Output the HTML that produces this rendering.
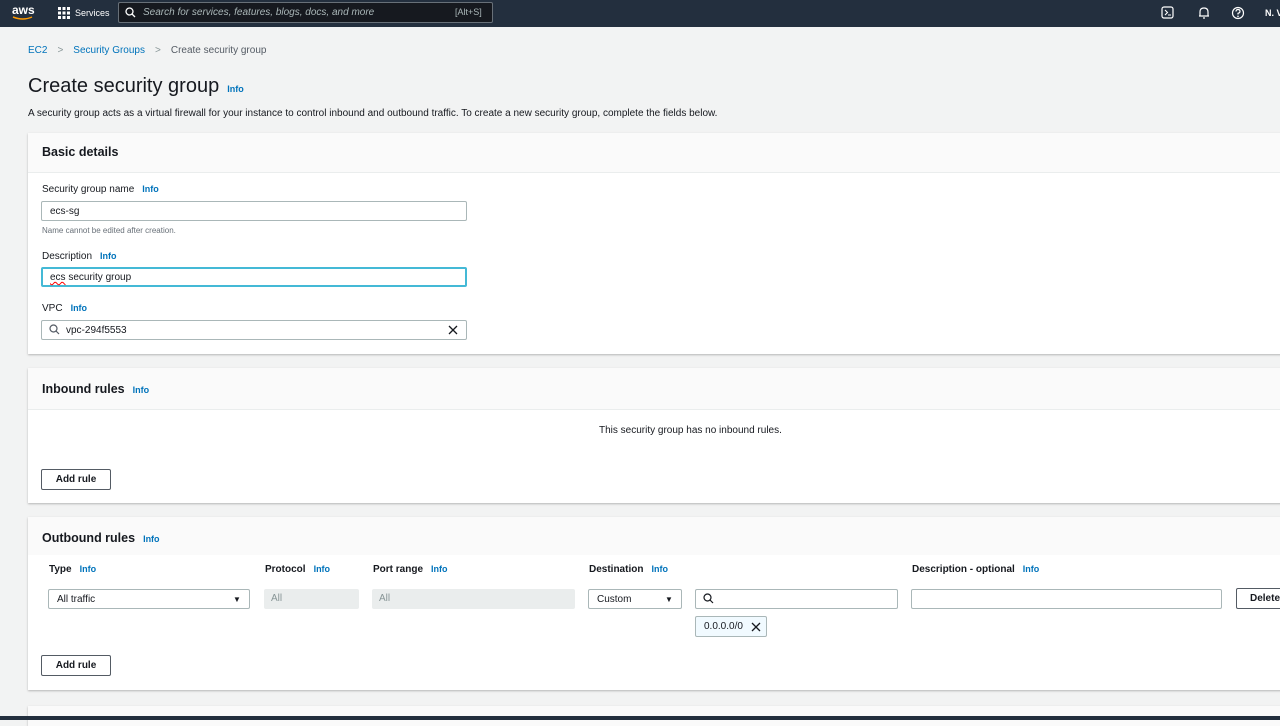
<!DOCTYPE html>
<html><head><meta charset="utf-8"><style>
*{box-sizing:border-box;margin:0;padding:0}
body{width:1280px;height:720px;overflow:hidden;background:#f2f3f3;font-family:"Liberation Sans",sans-serif;color:#16191f;position:relative;font-size:10px}
.a{position:absolute;white-space:nowrap}
.nav{left:0;top:0;width:1280px;height:27px;background:#232f3e}
.info{color:#0073bb;font-size:9px;font-weight:bold;margin-left:8px}
.panel{left:28px;width:1260px;background:#fff;box-shadow:0 1px 2px rgba(0,0,0,.25)}
.ph{background:#fafafa;border-bottom:1px solid #eaeded}
.inp{border:1px solid #aab7b8;border-radius:2px;background:#fff;height:20px;font-size:10px;padding:4px 8px}
.lbl{font-size:10px;color:#16191f}
.btn{border:1px solid #545b64;border-radius:2px;background:#fff;font-weight:bold;font-size:10px;text-align:center;line-height:19px;height:21px}
.th{font-size:10px;font-weight:bold}
.dis{background:#eaeded;border-radius:2px;color:#879596;font-size:10px;padding:4px 7px;height:20px}
</style></head><body>
<div class="a nav"></div>
<div class="a" style="left:12px;top:3px;color:#fff;font-size:12px;font-weight:bold">aws</div>
<svg class="a" style="left:12px;top:16px" width="22" height="5"><path d="M1 1 Q11 5 20 1" stroke="#f90" stroke-width="1.5" fill="none"/></svg>
<svg class="a" style="left:58px;top:7px" width="12" height="12" fill="#fff"><rect x="0" y="0" width="3" height="3"/><rect x="4.5" y="0" width="3" height="3"/><rect x="9" y="0" width="3" height="3"/><rect x="0" y="4.5" width="3" height="3"/><rect x="4.5" y="4.5" width="3" height="3"/><rect x="9" y="4.5" width="3" height="3"/><rect x="0" y="9" width="3" height="3"/><rect x="4.5" y="9" width="3" height="3"/><rect x="9" y="9" width="3" height="3"/></svg>
<div class="a" style="left:75px;top:8px;color:#fff;font-size:9px">Services</div>
<div class="a" style="left:118px;top:2px;width:375px;height:21px;border:1px solid #687078;background:#16191f;border-radius:2px"></div>
<svg class="a" style="left:125px;top:7px" width="11" height="11"><circle cx="4.5" cy="4.5" r="3.5" stroke="#fff" stroke-width="1.3" fill="none"/><path d="M7 7 L10 10" stroke="#fff" stroke-width="1.3"/></svg>
<div class="a" style="left:143px;top:7px;color:#aab7b8;font-size:10px;font-style:italic">Search for services, features, blogs, docs, and more</div>
<div class="a" style="left:455px;top:7px;color:#aab7b8;font-size:9px">[Alt+S]</div>
<svg class="a" style="left:1161px;top:6px" width="14" height="14"><rect x="1" y="1" width="11" height="11" rx="2" stroke="#fff" fill="none" stroke-width="1.2"/><path d="M4 4 L6.5 6.5 L4 9 M7 9 H10" stroke="#fff" fill="none" stroke-width="1.1"/></svg>
<svg class="a" style="left:1197px;top:6px" width="14" height="14"><path d="M3 10 L3 6 Q3 2 7 2 Q11 2 11 6 L11 10 Z M2 10 H12 M6 12 H8" stroke="#fff" fill="none" stroke-width="1.2"/></svg>
<svg class="a" style="left:1231px;top:6px" width="14" height="14"><circle cx="7" cy="7" r="5.5" stroke="#fff" fill="none" stroke-width="1.2"/><path d="M5 5.5 Q5 3.5 7 3.5 Q9 3.5 9 5.5 Q9 6.8 7 7.3 V8.5" stroke="#fff" fill="none" stroke-width="1.2"/><circle cx="7" cy="10.3" r=".8" fill="#fff"/></svg>
<div class="a" style="left:1265px;top:8px;color:#fff;font-size:9px;font-weight:bold">N. V</div>

<div class="a" style="left:28px;top:45px;font-size:10px;color:#545b64"><span style="color:#0073bb">EC2</span><span style="margin:0 10px;color:#879596">&gt;</span><span style="color:#0073bb">Security Groups</span><span style="margin:0 10px;color:#879596">&gt;</span>Create security group</div>
<div class="a" style="left:28px;top:75px;font-size:20px">Create security group<span class="info" style="font-size:9px">Info</span></div>
<div class="a" style="left:28px;top:108px;font-size:10px;color:#16191f">A security group acts as a virtual firewall for your instance to control inbound and outbound traffic. To create a new security group, complete the fields below.</div>

<div class="a panel" style="top:133px;height:221px"><div class="ph" style="height:40px"></div></div>
<div class="a" style="left:42px;top:145px;font-size:12.5px;font-weight:bold">Basic details</div>
<div class="a lbl" style="left:42px;top:184px">Security group name<span class="info">Info</span></div>
<div class="a inp" style="left:41px;top:201px;width:426px">ecs-sg</div>
<div class="a" style="left:42px;top:226px;font-size:8px;color:#687078">Name cannot be edited after creation.</div>
<div class="a lbl" style="left:42px;top:251px">Description<span class="info">Info</span></div>
<div class="a inp" style="left:41px;top:267px;width:426px;border:2px solid #44b9d6;padding:3px 7px"><span style="text-decoration:underline wavy red">ecs</span> security group</div>
<div class="a lbl" style="left:42px;top:303px">VPC<span class="info">Info</span></div>
<div class="a inp" style="left:41px;top:320px;width:426px;padding-left:24px">vpc-294f5553</div>
<svg class="a" style="left:49px;top:324px" width="11" height="11"><circle cx="4.5" cy="4.5" r="3.5" stroke="#545b64" stroke-width="1.2" fill="none"/><path d="M7 7 L10 10" stroke="#545b64" stroke-width="1.2"/></svg>
<svg class="a" style="left:448px;top:325px" width="10" height="10"><path d="M1 1 L9 9 M9 1 L1 9" stroke="#16191f" stroke-width="1.3"/></svg>

<div class="a panel" style="top:368px;height:135px"><div class="ph" style="height:42px"></div></div>
<div class="a" style="left:42px;top:382px;font-size:12.5px;font-weight:bold">Inbound rules<span class="info">Info</span></div>
<div class="a" style="left:599px;top:425px;font-size:10px">This security group has no inbound rules.</div>
<div class="a btn" style="left:41px;top:469px;width:70px">Add rule</div>

<div class="a panel" style="top:517px;height:173px"><div class="ph" style="height:38px;border:none"></div></div>
<div class="a" style="left:42px;top:531px;font-size:12.5px;font-weight:bold">Outbound rules<span class="info">Info</span></div>
<div class="a th" style="left:49px;top:564px">Type<span class="info">Info</span></div>
<div class="a th" style="left:265px;top:564px">Protocol<span class="info">Info</span></div>
<div class="a th" style="left:373px;top:564px">Port range<span class="info">Info</span></div>
<div class="a th" style="left:589px;top:564px">Destination<span class="info">Info</span></div>
<div class="a th" style="left:912px;top:564px">Description - optional<span class="info">Info</span></div>
<div class="a inp" style="left:48px;top:589px;width:202px">All traffic</div>
<div class="a" style="left:233px;top:595px;font-size:8px">▼</div>
<div class="a dis" style="left:264px;top:589px;width:95px">All</div>
<div class="a dis" style="left:372px;top:589px;width:203px">All</div>
<div class="a inp" style="left:588px;top:589px;width:94px">Custom</div>
<div class="a" style="left:665px;top:595px;font-size:8px">▼</div>
<div class="a inp" style="left:695px;top:589px;width:203px"></div>
<svg class="a" style="left:703px;top:593px" width="11" height="11"><circle cx="4.5" cy="4.5" r="3.5" stroke="#16191f" stroke-width="1.2" fill="none"/><path d="M7 7 L10 10" stroke="#16191f" stroke-width="1.2"/></svg>
<div class="a inp" style="left:911px;top:589px;width:311px"></div>
<div class="a btn" style="left:1236px;top:588px;width:60px;text-align:left;padding-left:13px">Delete</div>
<div class="a" style="left:695px;top:616px;width:72px;height:21px;background:#f1faff;border:1px solid #aab7b8;border-radius:2px;font-size:10px;padding:4px 8px">0.0.0.0/0</div>
<svg class="a" style="left:751px;top:622px" width="10" height="10"><path d="M1 1 L9 9 M9 1 L1 9" stroke="#16191f" stroke-width="1.3"/></svg>
<div class="a btn" style="left:41px;top:655px;width:70px">Add rule</div>

<div class="a panel" style="top:706px;height:20px"><div class="ph" style="height:20px;border:none"></div></div>
<div class="a" style="left:0;top:716px;width:1280px;height:4px;background:#232f3e"></div>
</body></html>
